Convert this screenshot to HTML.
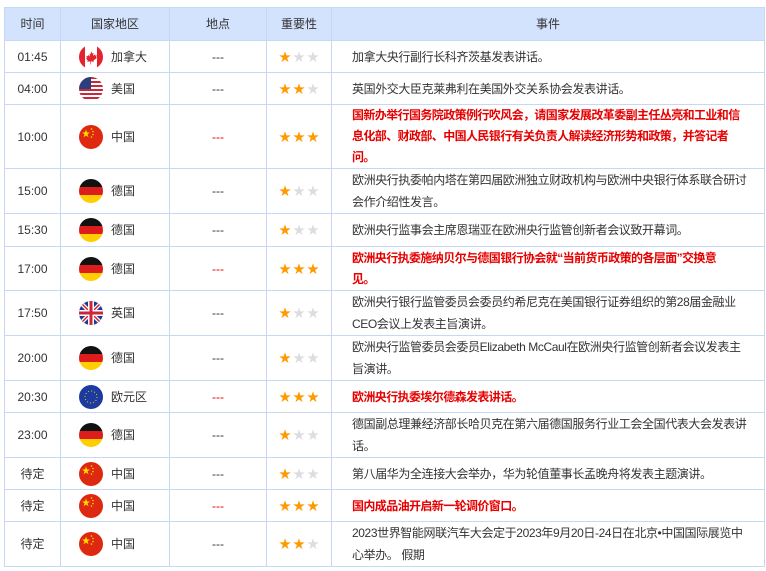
<!DOCTYPE html>
<html><head><meta charset="utf-8"><style>
html,body{margin:0;padding:0;background:#fff;width:766px;height:571px;overflow:hidden}
body{font-family:"Liberation Sans","Noto Sans CJK SC",sans-serif;font-size:12px;color:#333}
table{position:absolute;left:4px;top:7px;border-collapse:collapse;table-layout:fixed;width:760px}
td,th{border:1px solid #c6d8f4;padding:0;text-align:center;vertical-align:middle;line-height:22px}
th{background:#d3e3fd;font-weight:normal;color:#333;height:32px;font-size:12px}
td.ev{text-align:left;padding:0 0 0 20px;font-size:12px;letter-spacing:-0.4px;white-space:nowrap;overflow:hidden}
td.c{text-align:left;padding-left:18px}
.fl{display:inline-block;vertical-align:middle;width:24px;height:24px;margin-right:8px;border-radius:50%;overflow:hidden}
.cn{vertical-align:middle}
.s{font-size:12px;letter-spacing:2px;color:#ddd;padding-left:2px}
.s b{color:#f90;font-weight:normal}
td.ev.r{color:#e60000;font-weight:bold;letter-spacing:-0.6px}
.rd{color:#e60000}
</style></head><body>
<svg width="0" height="0" style="position:absolute">
<defs>
<symbol id="ca" viewBox="0 0 24 24"><rect width="24" height="24" fill="#fff"/><rect width="6" height="24" fill="#e4232f"/><rect x="18" width="6" height="24" fill="#e4232f"/><path d="M12 6l1.2 2.5 1.3-.6-.5 3 1.8-1.5.5 1.2 1.5-.3-.8 2 1 .6-3.5 2.6.4 1.3-3-.4v3h-.6v-3l-3 .4.4-1.3L7 13.5l1-.6-.8-2 1.5.3.5-1.2 1.8 1.5-.5-3 1.3.6z" fill="#e4232f"/></symbol>
<symbol id="us" viewBox="0 0 24 24"><rect width="24" height="24" fill="#fff"/><g fill="#c8283c"><rect y="0" width="24" height="2"/><rect y="4" width="24" height="2"/><rect y="8" width="24" height="2"/><rect y="12" width="24" height="2"/><rect y="16" width="24" height="2"/><rect y="20" width="24" height="2"/></g><rect width="12" height="12" fill="#2b3f7c"/></symbol>
<symbol id="cn" viewBox="0 0 24 24"><rect width="24" height="24" fill="#de2910"/><path d="M7 4.5l1 3h3l-2.5 1.8 1 3L7 10.5 4.5 12.3l1-3L3 7.5h3z" fill="#ffde00"/><g fill="#ffde00"><circle cx="12.5" cy="4" r=".8"/><circle cx="14" cy="6.5" r=".8"/><circle cx="14" cy="9.5" r=".8"/><circle cx="12.5" cy="12" r=".8"/></g></symbol>
<symbol id="de" viewBox="0 0 24 24"><rect width="24" height="8" fill="#111"/><rect y="8" width="24" height="8" fill="#dd1c1c"/><rect y="16" width="24" height="8" fill="#ffce00"/></symbol>
<symbol id="gb" viewBox="0 0 24 24"><rect width="24" height="24" fill="#1f3a8a"/><path d="M0 0L24 24M24 0L0 24" stroke="#fff" stroke-width="4"/><path d="M0 0L24 24M24 0L0 24" stroke="#d0243c" stroke-width="1.5"/><path d="M12 0V24M0 12H24" stroke="#fff" stroke-width="6"/><path d="M12 0V24M0 12H24" stroke="#d0243c" stroke-width="3"/></symbol>
<symbol id="eu" viewBox="0 0 24 24"><rect width="24" height="24" fill="#1d3aa0"/><circle cx="12" cy="12" r="6" fill="none" stroke="#f5d000" stroke-width="1" stroke-dasharray="1 2.14"/></symbol>
</defs></svg>
<table>
<colgroup><col style="width:56px"><col style="width:109px"><col style="width:97px"><col style="width:65px"><col style="width:433px"></colgroup>
<tr><th>时间</th><th>国家地区</th><th>地点</th><th>重要性</th><th>事件</th></tr>
<tr style="height:32px"><td>01:45</td><td class="c"><svg class="fl" viewBox="0 0 24 24"><use href="#ca" width="24" height="24"/></svg><span class="cn">加拿大</span></td><td>---</td><td class="s"><b>★</b>★★</td><td class="ev">加拿大央行副行长科齐茨基发表讲话。</td></tr>
<tr style="height:32px"><td>04:00</td><td class="c"><svg class="fl" viewBox="0 0 24 24"><use href="#us" width="24" height="24"/></svg><span class="cn">美国</span></td><td>---</td><td class="s"><b>★★</b>★</td><td class="ev">英国外交大臣克莱弗利在美国外交关系协会发表讲话。</td></tr>
<tr style="height:64px"><td>10:00</td><td class="c"><svg class="fl" viewBox="0 0 24 24"><use href="#cn" width="24" height="24"/></svg><span class="cn">中国</span></td><td class="rd">---</td><td class="s"><b>★★★</b></td><td class="ev r" style="line-height:21px">国新办举行国务院政策例行吹风会，请国家发展改革委副主任丛亮和工业和信<br>息化部、财政部、中国人民银行有关负责人解读经济形势和政策，并答记者<br>问。</td></tr>
<tr style="height:45px"><td>15:00</td><td class="c"><svg class="fl" viewBox="0 0 24 24"><use href="#de" width="24" height="24"/></svg><span class="cn">德国</span></td><td>---</td><td class="s"><b>★</b>★★</td><td class="ev">欧洲央行执委帕内塔在第四届欧洲独立财政机构与欧洲中央银行体系联合研讨<br>会作介绍性发言。</td></tr>
<tr style="height:33px"><td>15:30</td><td class="c"><svg class="fl" viewBox="0 0 24 24"><use href="#de" width="24" height="24"/></svg><span class="cn">德国</span></td><td>---</td><td class="s"><b>★</b>★★</td><td class="ev">欧洲央行监事会主席恩瑞亚在欧洲央行监管创新者会议致开幕词。</td></tr>
<tr style="height:44px"><td>17:00</td><td class="c"><svg class="fl" viewBox="0 0 24 24"><use href="#de" width="24" height="24"/></svg><span class="cn">德国</span></td><td class="rd">---</td><td class="s"><b>★★★</b></td><td class="ev r" style="line-height:21px">欧洲央行执委施纳贝尔与德国银行协会就“当前货币政策的各层面”交换意<br>见。</td></tr>
<tr style="height:45px"><td>17:50</td><td class="c"><svg class="fl" viewBox="0 0 24 24"><use href="#gb" width="24" height="24"/></svg><span class="cn">英国</span></td><td>---</td><td class="s"><b>★</b>★★</td><td class="ev">欧洲央行银行监管委员会委员约希尼克在美国银行证券组织的第28届金融业<br>CEO会议上发表主旨演讲。</td></tr>
<tr style="height:45px"><td>20:00</td><td class="c"><svg class="fl" viewBox="0 0 24 24"><use href="#de" width="24" height="24"/></svg><span class="cn">德国</span></td><td>---</td><td class="s"><b>★</b>★★</td><td class="ev">欧洲央行监管委员会委员Elizabeth McCaul在欧洲央行监管创新者会议发表主<br>旨演讲。</td></tr>
<tr style="height:32px"><td>20:30</td><td class="c"><svg class="fl" viewBox="0 0 24 24"><use href="#eu" width="24" height="24"/></svg><span class="cn">欧元区</span></td><td class="rd">---</td><td class="s"><b>★★★</b></td><td class="ev r">欧洲央行执委埃尔德森发表讲话。</td></tr>
<tr style="height:45px"><td>23:00</td><td class="c"><svg class="fl" viewBox="0 0 24 24"><use href="#de" width="24" height="24"/></svg><span class="cn">德国</span></td><td>---</td><td class="s"><b>★</b>★★</td><td class="ev">德国副总理兼经济部长哈贝克在第六届德国服务行业工会全国代表大会发表讲<br>话。</td></tr>
<tr style="height:32px"><td>待定</td><td class="c"><svg class="fl" viewBox="0 0 24 24"><use href="#cn" width="24" height="24"/></svg><span class="cn">中国</span></td><td>---</td><td class="s"><b>★</b>★★</td><td class="ev">第八届华为全连接大会举办，华为轮值董事长孟晚舟将发表主题演讲。</td></tr>
<tr style="height:32px"><td>待定</td><td class="c"><svg class="fl" viewBox="0 0 24 24"><use href="#cn" width="24" height="24"/></svg><span class="cn">中国</span></td><td class="rd">---</td><td class="s"><b>★★★</b></td><td class="ev r">国内成品油开启新一轮调价窗口。</td></tr>
<tr style="height:45px"><td>待定</td><td class="c"><svg class="fl" viewBox="0 0 24 24"><use href="#cn" width="24" height="24"/></svg><span class="cn">中国</span></td><td>---</td><td class="s"><b>★★</b>★</td><td class="ev">2023世界智能网联汽车大会定于2023年9月20日-24日在北京•中国国际展览中<br>心举办。 假期</td></tr>
</table>
</body></html>
